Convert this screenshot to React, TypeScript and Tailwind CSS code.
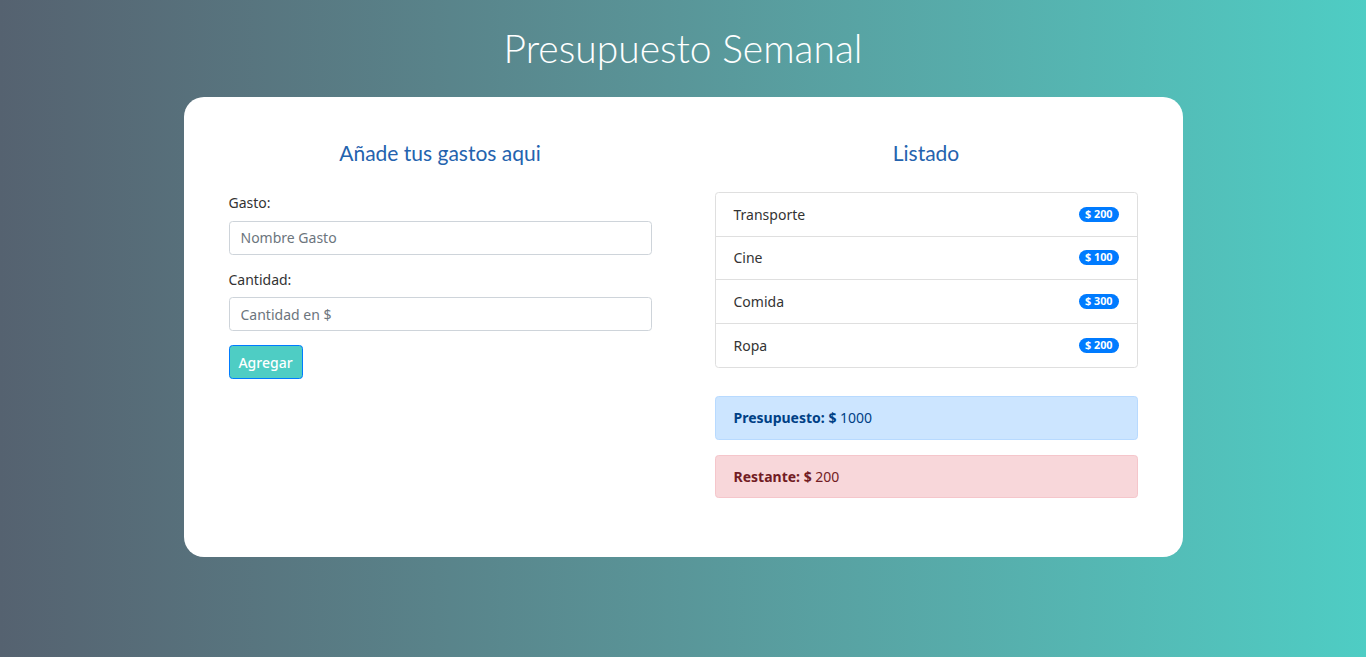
import React from 'react';

const gastos = [
  { nombre: 'Transporte', cantidad: 200 },
  { nombre: 'Cine', cantidad: 100 },
  { nombre: 'Comida', cantidad: 300 },
  { nombre: 'Ropa', cantidad: 200 },
];

const body = { fontFamily: '"Noto Sans", "Open Sans", sans-serif' };
const display = { fontFamily: 'Lato, "Open Sans", sans-serif' };

const App: React.FC = () => {
  return (
    <div className="min-h-screen w-full bg-linear-to-r from-[#556270] to-[#4ecdc4] text-[#212529]" style={body}>
      {/* Header */}
      <header className="h-[97px] flex items-center justify-center">
        <h1 className="text-[39px] text-white font-light" style={display}>Presupuesto Semanal</h1>
      </header>

      {/* Main card */}
      <div className="mx-auto w-[999px] bg-white rounded-[20px] px-[45px] pt-[41px] pb-[59px]">
        <div className="grid grid-cols-2 gap-[63px]">
          {/* Form */}
          <div>
            <h2 className="text-[21px] leading-[30px] text-center text-[#2463ae] mb-6" style={display}>
              Añade tus gastos aqui
            </h2>
            <form>
              <div className="mb-[14px]">
                <label className="block text-[14px] leading-[21.6px] mb-[7px] text-[#333]">Gasto:</label>
                <input
                  type="text"
                  placeholder="Nombre Gasto"
                  className="w-full h-[34px] px-[11px] text-[14px] border border-[#ced4da] rounded-[3.6px] placeholder:text-[#6c757d] outline-none"
                  style={body}
                />
              </div>
              <div className="mb-[14px]">
                <label className="block text-[14px] leading-[21.6px] mb-[7px] text-[#333]">Cantidad:</label>
                <input
                  type="number"
                  placeholder="Cantidad en $"
                  className="w-full h-[34px] px-[11px] text-[14px] border border-[#ced4da] rounded-[3.6px] placeholder:text-[#6c757d] outline-none"
                  style={body}
                />
              </div>
              <button
                type="button"
                className="h-[34px] w-[74px] bg-[#4ecdc4] text-white text-[14px] font-medium border border-[#007bff] rounded-[3.6px]"
              >
                Agregar
              </button>
            </form>
          </div>

          {/* Listado */}
          <div>
            <h2 className="text-[21px] leading-[30px] text-center text-[#2463ae] mb-6" style={display}>
              Listado
            </h2>
            <ul className="border border-[#dfdfdf] rounded-[3.6px] mb-[28px]">
              {gastos.map((g, i) => (
                <li
                  key={i}
                  className="flex items-center justify-between h-[43.5px] px-[18px] text-[14px] text-[#333] border-b border-[#dfdfdf] last:border-b-0"
                >
                  <span>{g.nombre}</span>
                  <span className="bg-[#007bff] text-white text-[10.8px] font-bold leading-none rounded-full px-[6px] py-[2px]">
                    $ {g.cantidad}
                  </span>
                </li>
              ))}
            </ul>

            <div className="bg-[#cce5ff] border border-[#b8daff] text-[#004085] rounded-[3.6px] px-[18px] py-[10px] text-[14px] leading-[21.6px] mb-[15px]">
              <strong>Presupuesto: $</strong> 1000
            </div>
            <div className="bg-[#f8d7da] border border-[#f5c6cb] text-[#721c24] rounded-[3.6px] px-[18px] py-[10px] text-[14px] leading-[21.6px]">
              <strong>Restante: $</strong> 200
            </div>
          </div>
        </div>
      </div>
    </div>
  );
};

export default App;
